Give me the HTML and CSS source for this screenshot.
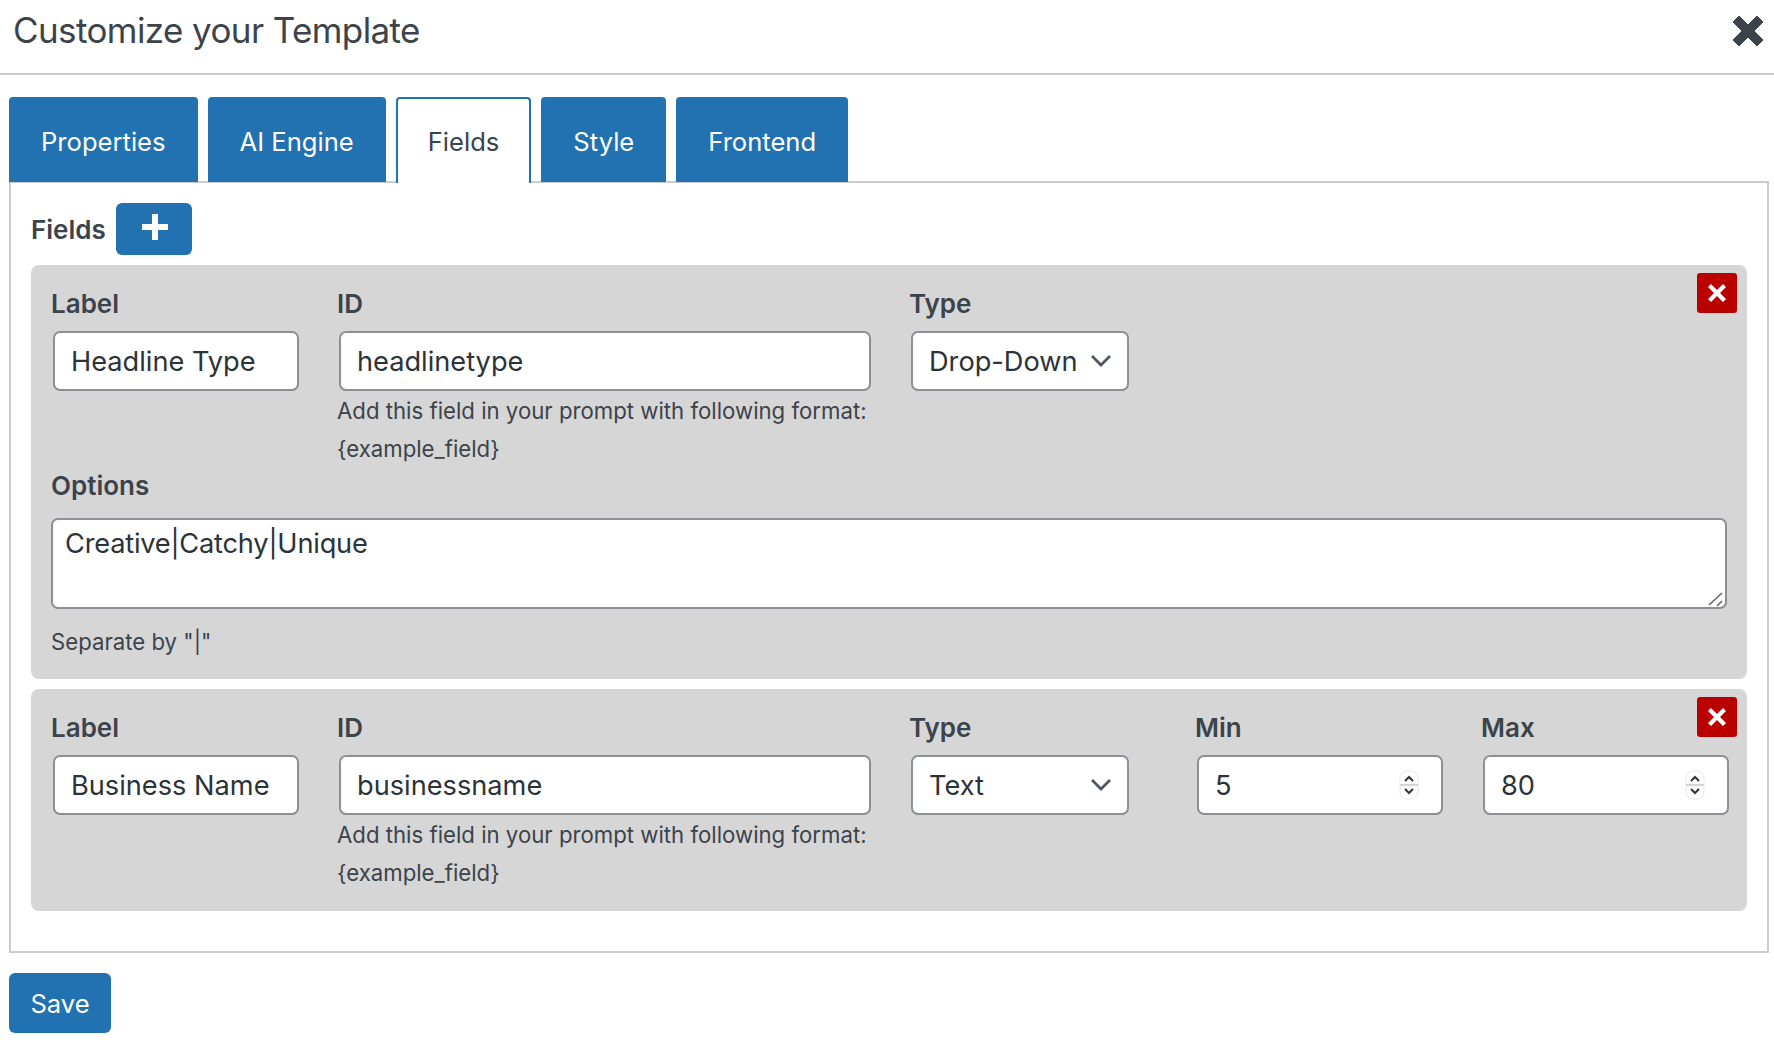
FILE: index.html
```html
<!DOCTYPE html>
<html lang="en">
<head>
<meta charset="utf-8">
<title>Customize your Template</title>
<link rel="stylesheet" href="styles.css">
</head>
<body>
<header class="head">
  <h1 class="title">Customize your Template</h1>
  <button class="close" aria-label="Close">
    <svg width="32" height="32" viewBox="0 0 32 32"><path d="M1 7l6-6 9 9 9-9 6 6-9 9 9 9-6 6-9-9-9 9-6-6 9-9z" fill="#3c434a" stroke="#3c434a" stroke-linejoin="round"/></svg>
  </button>
</header>
<main class="body">
  <nav class="tabs">
    <a class="tab">Properties</a>
    <a class="tab">AI Engine</a>
    <a class="tab active">Fields</a>
    <a class="tab">Style</a>
    <a class="tab">Frontend</a>
  </nav>
  <section class="panel">
    <div class="fields-head">
      <span class="fields-title">Fields</span>
      <button class="add" aria-label="Add field">
        <svg width="28" height="28" viewBox="0 0 28 28"><path d="M11 1h6v10h10v6H17v10h-6V17H1v-6h10z" fill="#fff"/></svg>
      </button>
    </div>

    <article class="card">
      <button class="del" aria-label="Remove">
        <svg width="20" height="20" viewBox="0 0 20 20"><path d="M1 4l3-3 6 6 6-6 3 3-6 6 6 6-3 3-6-6-6 6-3-3 6-6z" fill="#fff"/></svg>
      </button>
      <div class="row">
        <div class="col col-label"><label class="lbl">Label</label><input class="inp" value="Headline Type"></div>
        <div class="col col-id">
          <label class="lbl">ID</label><input class="inp" value="headlinetype">
          <p class="help">Add this field in your prompt with following format:<br>{example_field}</p>
        </div>
        <div class="col col-type"><label class="lbl">Type</label>
          <div class="sel-wrap"><select class="inp sel"><option>Drop-Down</option></select>
            <svg class="chev" width="22" height="14" viewBox="0 0 22 14"><path d="M2 2l9 9 9-9" fill="none" stroke="#50575e" stroke-width="2.8"/></svg></div>
        </div>
      </div>
      <label class="lbl opt-lbl">Options</label>
      <div class="area-wrap">
        <textarea class="area">Creative|Catchy|Unique</textarea>
        <svg class="grip" width="16" height="16" viewBox="0 0 16 16"><path d="M1 14L14 2M9 15l5-5" fill="none" stroke="#666" stroke-width="1.6"/></svg>
      </div>
      <p class="sep">Separate by "|"</p>
    </article>

    <article class="card">
      <button class="del" aria-label="Remove">
        <svg width="20" height="20" viewBox="0 0 20 20"><path d="M1 4l3-3 6 6 6-6 3 3-6 6 6 6-3 3-6-6-6 6-3-3 6-6z" fill="#fff"/></svg>
      </button>
      <div class="row">
        <div class="col col-label"><label class="lbl">Label</label><input class="inp" value="Business Name"></div>
        <div class="col col-id">
          <label class="lbl">ID</label><input class="inp" value="businessname">
          <p class="help">Add this field in your prompt with following format:<br>{example_field}</p>
        </div>
        <div class="col col-type"><label class="lbl">Type</label>
          <div class="sel-wrap"><select class="inp sel"><option>Text</option></select>
            <svg class="chev" width="22" height="14" viewBox="0 0 22 14"><path d="M2 2l9 9 9-9" fill="none" stroke="#50575e" stroke-width="2.8"/></svg></div>
        </div>
        <div class="col col-num"><label class="lbl">Min</label>
          <div class="num-wrap"><input class="inp" type="number" value="5">
            <span class="spin"><svg width="20" height="30" viewBox="0 0 20 30"><rect x="1" y="1" width="18" height="28" rx="7" fill="#fff" stroke="#e8e8e8"/><path d="M1 15h18" stroke="#d4d4d4" stroke-width="2"/><path d="M6 11l4-4 4 4M6 19l4 4 4-4" fill="none" stroke="#333" stroke-width="2"/></svg></span></div>
        </div>
        <div class="col col-num"><label class="lbl">Max</label>
          <div class="num-wrap"><input class="inp" type="number" value="80">
            <span class="spin"><svg width="20" height="30" viewBox="0 0 20 30"><rect x="1" y="1" width="18" height="28" rx="7" fill="#fff" stroke="#e8e8e8"/><path d="M1 15h18" stroke="#d4d4d4" stroke-width="2"/><path d="M6 11l4-4 4 4M6 19l4 4 4-4" fill="none" stroke="#333" stroke-width="2"/></svg></span></div>
        </div>
      </div>
    </article>
  </section>
  <button class="save">Save</button>
</main>
</body>
</html>
```

FILE: styles.css
```css
* { box-sizing: border-box; }
html, body { margin: 0; height: 100%; overflow: hidden; }
body { background: #fff; color: #3c434a; font-family: Inter, "Noto Sans", sans-serif; }

.head {
  display: flex; align-items: center; justify-content: space-between;
  height: 75px; padding: 0 10px 11px 13px;
  border-bottom: 2px solid #ccc;
}
.title { margin: 0 0 2px; font-size: 35px; font-weight: 410; line-height: 1.2; letter-spacing: -0.6px; }
.close { border: 0; background: none; padding: 0; display: flex; }

.body { padding: 22px 5px 0 9px; }
.tabs { display: flex; gap: 10px; height: 85px; margin-bottom: -1px; }
.tab {
  display: flex; align-items: center; padding: 1px 30px 0;
  background: #2271b1; color: #fff; font-size: 25.6px; font-weight: 440;
  border: 2px solid #2271b1; border-bottom: 0; border-radius: 4px 4px 0 0;
  position: relative; z-index: 1;
}
.tab.active { background: #fff; color: #3c434a; margin-bottom: -1px; }

.panel { border: 2px solid #ccc; padding: 20px 20px 40px; }
.fields-head { display: flex; align-items: center; gap: 10px; height: 52px; margin-bottom: 10px; }
.fields-title { font-size: 26px; font-weight: 600; }
.add {
  width: 76px; height: 52px; border: 0; border-radius: 6px; background: #2271b1;
  display: flex; align-items: center; justify-content: center; padding: 0 0 4px 2px;
}

.card { position: relative; background: #d6d6d6; border-radius: 8px; padding: 24px 20px 20px; margin-bottom: 10px; }
.card:last-child { margin-bottom: 0; padding-bottom: 19px; }
.del {
  position: absolute; top: 8px; right: 10px; width: 40px; height: 40px; padding: 0;
  border: 0; border-radius: 3px; background: #bb0000;
  display: flex; align-items: center; justify-content: center;
}
.row { display: flex; }
.col { flex: none; }
.col-label, .col-type, .col-num { width: 286px; }
.col-id { width: 572px; }
.lbl { display: block; font-size: 26px; font-weight: 600; line-height: 30px; margin-bottom: 12px; }
.inp {
  display: block; height: 60px; margin: 0 0 0 2px; padding: 0 16px;
  background: #fff; border: 2px solid #8c8f94; border-radius: 7px;
  font: 400 27.2px Inter, "Noto Sans", sans-serif; color: #2c3338; outline: 0;
}
.col-label .inp, .col-num .inp { width: 246px; }
.col-id .inp { width: 532px; }
.help { margin: 1px 0 0; font-size: 22.2px; line-height: 38px; }

.sel-wrap { position: relative; width: 220px; }
.sel { width: 218px; appearance: none; -webkit-appearance: none; }
.chev { position: absolute; right: 17px; top: 23px; pointer-events: none; }

.num-wrap { position: relative; width: 248px; }
.num-wrap input { appearance: textfield; -moz-appearance: textfield; }
.num-wrap input::-webkit-inner-spin-button { -webkit-appearance: none; }
.spin { position: absolute; right: 24px; top: 15px; display: flex; }

.opt-lbl { margin-top: 3px; margin-bottom: 17px; }
.area-wrap { position: relative; }
.area {
  display: block; width: 100%; height: 91px; padding: 7px 12px; margin: 0;
  background: #fff; border: 2px solid #8c8f94; border-radius: 7px; resize: none;
  font: 400 27.2px/1.25 Inter, "Noto Sans", sans-serif; letter-spacing: -0.2px; color: #2c3338; outline: 0;
}
.grip { position: absolute; right: 3px; bottom: 2px; pointer-events: none; }
.sep { margin: 16px 0 0; font-size: 22.2px; line-height: 34px; }

.save {
  display: block; margin-top: 20px; width: 102px; height: 60px; padding: 0;
  border: 0; border-radius: 6px; background: #2271b1; color: #fff;
  font: 440 25.6px Inter, "Noto Sans", sans-serif;
}
```
